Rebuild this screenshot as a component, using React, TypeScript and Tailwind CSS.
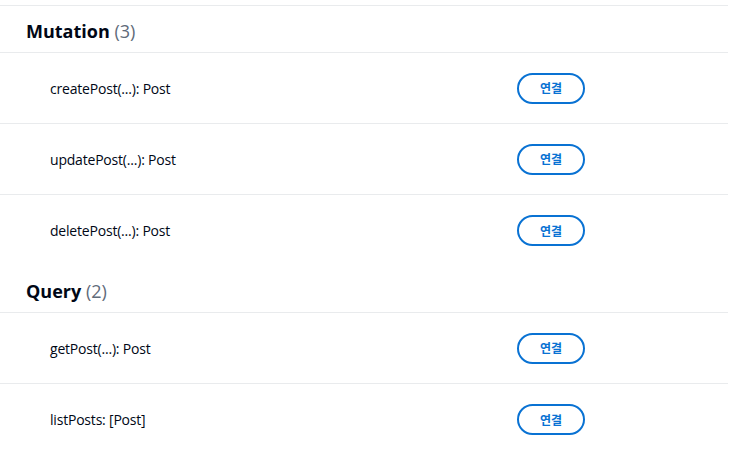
const sections = [
  {
    title: "Mutation",
    count: 3,
    fields: ["createPost(...): Post", "updatePost(...): Post", "deletePost(...): Post"],
  },
  {
    title: "Query",
    count: 2,
    fields: ["getPost(...): Post", "listPosts: [Post]"],
  },
];

export default function App() {
  return (
    <main
      className="min-h-screen bg-white text-[#000716]"
      style={{ fontFamily: '"Open Sans", "Noto Sans CJK KR", sans-serif' }}
    >
      <div className="w-[728px] mt-[5px] border-t border-[#e9ebed]">
        {sections.map((section) => (
          <section key={section.title}>
            {/* Section header */}
            <div className="h-[47px] flex items-center pl-[26px] pt-[4px] border-b border-[#e9ebed]">
              <h2 className="text-[18px] font-bold">
                {section.title}{" "}
                <span className="font-normal text-[#5f6b7a]">({section.count})</span>
              </h2>
            </div>

            {section.fields.map((field) => (
              <div
                key={field}
                className="h-[71px] flex items-center border-b border-[#e9ebed] last:border-b-0"
              >
                <span className="w-[517px] pl-[50px] text-[14px] tracking-[-0.2px]">{field}</span>
                <button
                  className="w-[68px] h-[31px] rounded-full border-2 border-[#0972d3] text-[#0972d3] text-[12px] font-bold flex items-center justify-center"
                  style={{ fontFamily: '"Noto Sans CJK KR", sans-serif' }}
                >
                  연결
                </button>
              </div>
            ))}
          </section>
        ))}
      </div>
    </main>
  );
}
